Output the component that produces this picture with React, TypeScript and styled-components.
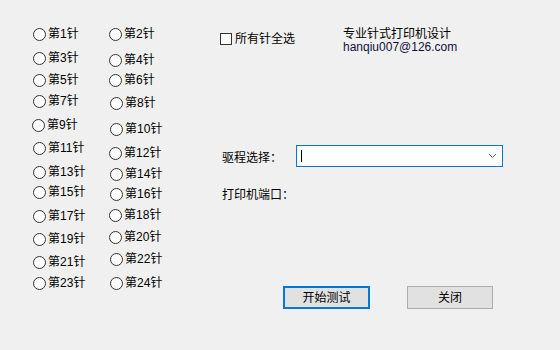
import styled, { createGlobalStyle } from "styled-components";

const GlobalStyle = createGlobalStyle`
  html, body {
    margin: 0;
    padding: 0;
    background: #f0f0f0;
  }
`;

type Pin = { n: number; y: number; x: number };

// circle centre y and circle left x, as placed on the dialog
const leftPins: Pin[] = [
  { n: 1, y: 34, x: 33 },
  { n: 3, y: 58, x: 33 },
  { n: 5, y: 80, x: 33 },
  { n: 7, y: 101, x: 33 },
  { n: 9, y: 125, x: 32 },
  { n: 11, y: 148, x: 33 },
  { n: 13, y: 172, x: 33 },
  { n: 15, y: 192, x: 33 },
  { n: 17, y: 216, x: 33 },
  { n: 19, y: 239, x: 33 },
  { n: 21, y: 262, x: 33 },
  { n: 23, y: 283, x: 33 },
];

const rightPins: Pin[] = [
  { n: 2, y: 34, x: 109 },
  { n: 4, y: 60, x: 109 },
  { n: 6, y: 80, x: 109 },
  { n: 8, y: 103, x: 110 },
  { n: 10, y: 129, x: 110 },
  { n: 12, y: 153, x: 109 },
  { n: 14, y: 174, x: 110 },
  { n: 16, y: 194, x: 110 },
  { n: 18, y: 215, x: 109 },
  { n: 20, y: 237, x: 109 },
  { n: 22, y: 259, x: 110 },
  { n: 24, y: 283, x: 110 },
];

const ITEM_H = 14;

const Dialog = styled.div`
  width: 560px;
  height: 350px;
  display: flex;
  background: #f0f0f0;
  color: #000;
  font-family: "Liberation Sans", "Noto Sans CJK SC", sans-serif;
  font-size: 12px;
  overflow: hidden;
`;

const PinPane = styled.div`
  width: 220px;
  display: flex;
`;

const PinColumn = styled.div<{ $pad: number; $width: number }>`
  width: ${(p) => p.$width}px;
  padding-left: ${(p) => p.$pad}px;
  display: flex;
  flex-direction: column;
  box-sizing: border-box;
`;

const RadioItem = styled.label<{ $top: number; $indent: number }>`
  display: flex;
  align-items: center;
  gap: 2px;
  height: ${ITEM_H}px;
  line-height: ${ITEM_H}px;
  margin-top: ${(p) => p.$top}px;
  margin-left: ${(p) => p.$indent}px;
  white-space: nowrap;
`;

const RadioDot = styled.span`
  width: 13px;
  height: 13px;
  box-sizing: border-box;
  border: 1px solid #333;
  border-radius: 50%;
  background: #fff;
  flex: none;
`;

const RadioText = styled.span`
  margin-top: -1px;
`;

const ControlPane = styled.div`
  flex: 1;
  display: flex;
  flex-direction: column;
`;

const TopRow = styled.div`
  display: flex;
  align-items: flex-start;
  margin-top: 28px;
`;

const CheckLabel = styled.label`
  width: 123px;
  height: 14px;
  margin-top: 4px;
  display: flex;
  align-items: center;
  gap: 3px;
  line-height: 14px;
`;

const CheckBox = styled.span`
  width: 12px;
  height: 12px;
  box-sizing: border-box;
  border: 1px solid #333;
  background: #fff;
  flex: none;
`;

const Info = styled.div`
  display: flex;
  flex-direction: column;
  line-height: 13px;
`;

const Mail = styled.span`
  color: #101040;
`;

const FieldRow = styled.div<{ $top: number }>`
  display: flex;
  align-items: flex-start;
  margin-top: ${(p) => p.$top}px;
  padding-left: 2px;
`;

const FieldLabel = styled.span<{ $shift: number }>`
  width: 74px;
  line-height: 14px;
  margin-top: ${(p) => p.$shift}px;
  white-space: nowrap;
`;

const Combo = styled.div`
  width: 207px;
  height: 22px;
  box-sizing: border-box;
  border: 1px solid #0078d7;
  background: #fff;
  display: flex;
  align-items: center;
  justify-content: space-between;
  padding: 0 5px 0 4px;
`;

const Caret = styled.span`
  width: 1px;
  height: 12px;
  background: #000;
`;

const ButtonRow = styled.div`
  display: flex;
  margin-top: 84px;
  padding-left: 63px;
  gap: 37px;
`;

const DlgButton = styled.button<{ $focused?: boolean; $width: number }>`
  width: ${(p) => p.$width}px;
  height: 23px;
  box-sizing: border-box;
  margin: 0;
  padding: 0;
  background: #e1e1e1;
  border: ${(p) => (p.$focused ? "2px solid #0078d7" : "1px solid #adadad")};
  font-family: "Liberation Sans", "Noto Sans CJK SC", sans-serif;
  font-size: 12px;
  color: #000;
  line-height: 14px;
`;

function PinList({ pins, start, pad, width }: { pins: Pin[]; start: number; pad: number; width: number }) {
  const base = start + pad;
  return (
    <PinColumn $pad={pad} $width={width}>
      {pins.map((pin, i) => {
        const prevBottom = i === 0 ? 0 : pins[i - 1].y + ITEM_H / 2;
        const top = pin.y - ITEM_H / 2 - prevBottom;
        return (
          <RadioItem key={pin.n} $top={top} $indent={pin.x - base}>
            <RadioDot />
            <RadioText>第{pin.n}针</RadioText>
          </RadioItem>
        );
      })}
    </PinColumn>
  );
}

export default function App() {
  return (
    <>
      <GlobalStyle />
      <Dialog>
        <PinPane>
          <PinList pins={leftPins} start={0} pad={32} width={77} />
          <PinList pins={rightPins} start={77} pad={32} width={143} />
        </PinPane>

        <ControlPane>
          <TopRow>
            <CheckLabel>
              <CheckBox />
              <span>所有针全选</span>
            </CheckLabel>
            <Info>
              <span>专业针式打印机设计</span>
              <Mail>hanqiu007@126.com</Mail>
            </Info>
          </TopRow>

          <FieldRow $top={91}>
            <FieldLabel $shift={6}>驱程选择：</FieldLabel>
            <Combo>
              <Caret />
              <svg width="9" height="6" viewBox="0 0 9 6">
                <path d="M1 1 L4.5 4.5 L8 1" fill="none" stroke="#606060" strokeWidth="1" />
              </svg>
            </Combo>
          </FieldRow>

          <FieldRow $top={21}>
            <FieldLabel $shift={0}>打印机端口：</FieldLabel>
          </FieldRow>

          <ButtonRow>
            <DlgButton $focused $width={87}>开始测试</DlgButton>
            <DlgButton $width={86}>关闭</DlgButton>
          </ButtonRow>
        </ControlPane>
      </Dialog>
    </>
  );
}
